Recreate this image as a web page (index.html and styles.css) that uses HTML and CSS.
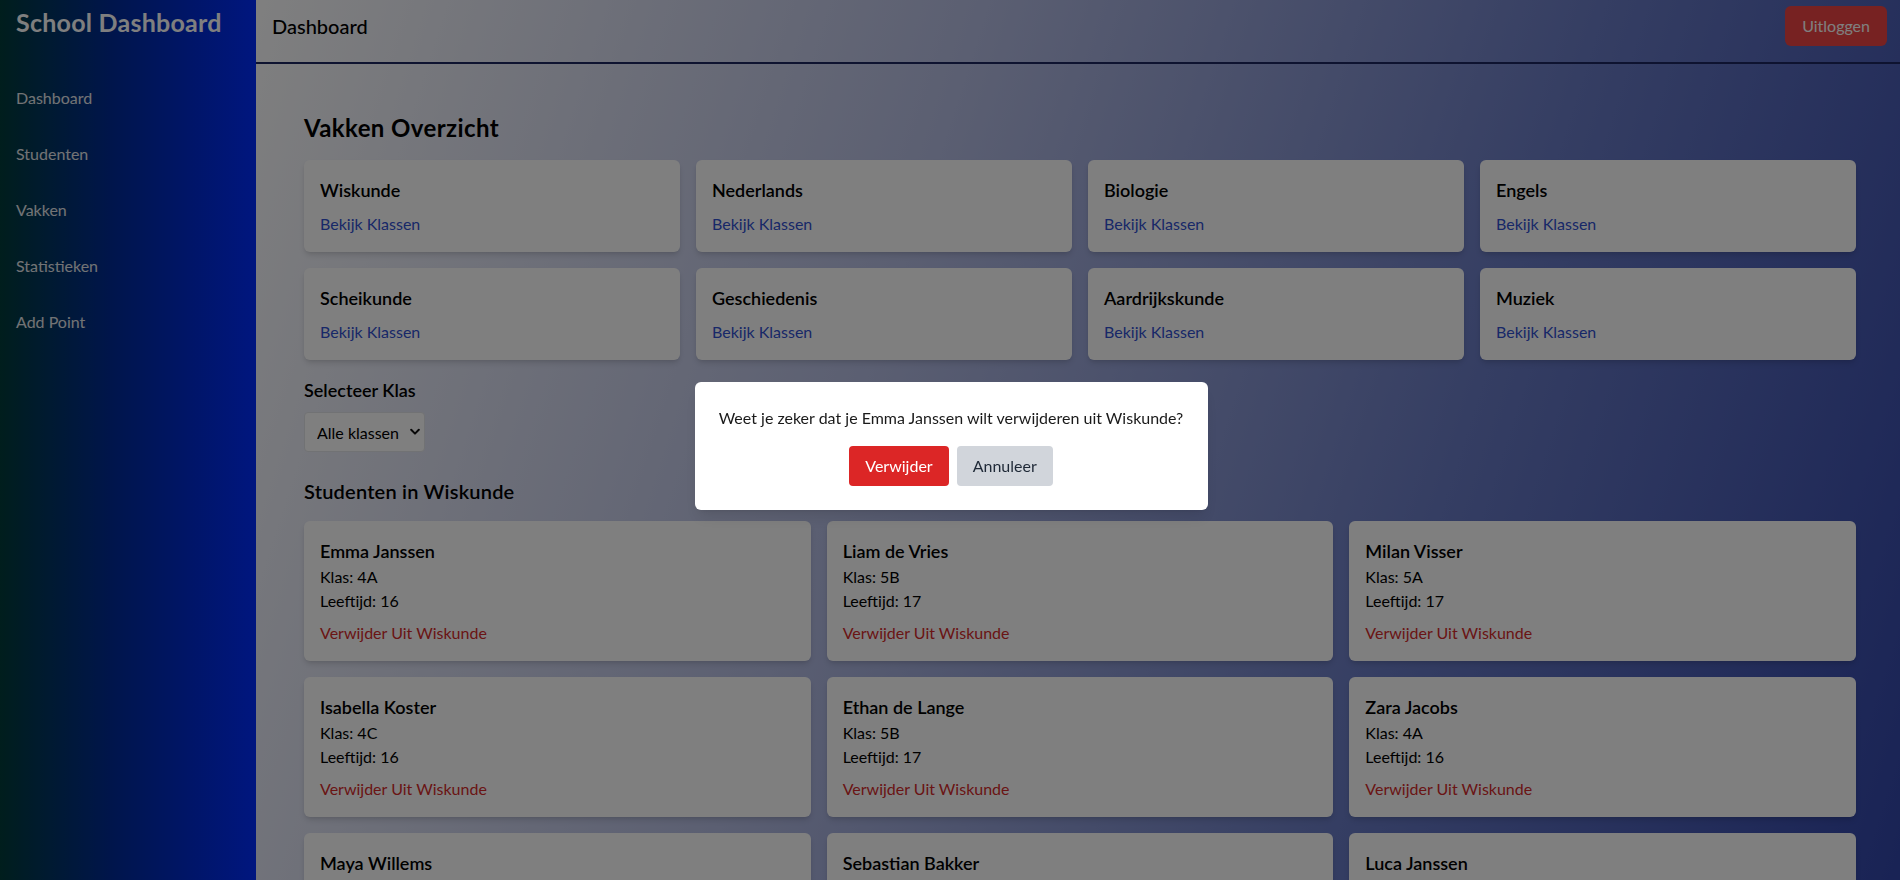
FILE: index.html
```html
<!DOCTYPE html>
<html lang="nl">
<head>
<meta charset="utf-8">
<title>School Dashboard</title>
<link rel="stylesheet" href="styles.css">
</head>
<body>
<div class="app">
  <aside class="sidebar">
    <div class="brand">School Dashboard</div>
    <nav class="nav">
      <a class="nav-link" href="#">Dashboard</a>
      <a class="nav-link" href="#">Studenten</a>
      <a class="nav-link" href="#">Vakken</a>
      <a class="nav-link" href="#">Statistieken</a>
      <a class="nav-link" href="#">Add Point</a>
    </nav>
  </aside>
  <div class="main">
    <header class="topbar">
      <h1 class="page-title">Dashboard</h1>
      <button class="logout" type="button">Uitloggen</button>
    </header>
    <main class="content">
      <h2 class="section-title">Vakken Overzicht</h2>
      <div class="subject-grid">
        <div class="card subject-card"><h3 class="card-title">Wiskunde</h3><a class="link-blue" href="#">Bekijk Klassen</a></div>
        <div class="card subject-card"><h3 class="card-title">Nederlands</h3><a class="link-blue" href="#">Bekijk Klassen</a></div>
        <div class="card subject-card"><h3 class="card-title">Biologie</h3><a class="link-blue" href="#">Bekijk Klassen</a></div>
        <div class="card subject-card"><h3 class="card-title">Engels</h3><a class="link-blue" href="#">Bekijk Klassen</a></div>
        <div class="card subject-card"><h3 class="card-title">Scheikunde</h3><a class="link-blue" href="#">Bekijk Klassen</a></div>
        <div class="card subject-card"><h3 class="card-title">Geschiedenis</h3><a class="link-blue" href="#">Bekijk Klassen</a></div>
        <div class="card subject-card"><h3 class="card-title">Aardrijkskunde</h3><a class="link-blue" href="#">Bekijk Klassen</a></div>
        <div class="card subject-card"><h3 class="card-title">Muziek</h3><a class="link-blue" href="#">Bekijk Klassen</a></div>
      </div>

      <label class="field-label" for="klas">Selecteer Klas</label>
      <div class="select-wrap">
        <select class="select" id="klas">
          <option>Alle klassen</option>
          <option>4A</option>
          <option>4B</option>
          <option>4C</option>
          <option>5A</option>
          <option>5B</option>
        </select>
        <svg class="chevron" width="10" height="8" viewBox="0 0 10 8" aria-hidden="true"><path d="M1.2 1.8 L5 5.6 L8.8 1.8" fill="none" stroke="#111" stroke-width="2" stroke-linecap="round" stroke-linejoin="round"/></svg>
      </div>

      <h2 class="students-title">Studenten in Wiskunde</h2>
      <div class="student-grid">
        <div class="card student-card"><h3 class="card-title">Emma Janssen</h3><p class="meta">Klas: 4A</p><p class="meta">Leeftijd: 16</p><a class="link-red" href="#">Verwijder Uit Wiskunde</a></div>
        <div class="card student-card"><h3 class="card-title">Liam de Vries</h3><p class="meta">Klas: 5B</p><p class="meta">Leeftijd: 17</p><a class="link-red" href="#">Verwijder Uit Wiskunde</a></div>
        <div class="card student-card"><h3 class="card-title">Milan Visser</h3><p class="meta">Klas: 5A</p><p class="meta">Leeftijd: 17</p><a class="link-red" href="#">Verwijder Uit Wiskunde</a></div>
        <div class="card student-card"><h3 class="card-title">Isabella Koster</h3><p class="meta">Klas: 4C</p><p class="meta">Leeftijd: 16</p><a class="link-red" href="#">Verwijder Uit Wiskunde</a></div>
        <div class="card student-card"><h3 class="card-title">Ethan de Lange</h3><p class="meta">Klas: 5B</p><p class="meta">Leeftijd: 17</p><a class="link-red" href="#">Verwijder Uit Wiskunde</a></div>
        <div class="card student-card"><h3 class="card-title">Zara Jacobs</h3><p class="meta">Klas: 4A</p><p class="meta">Leeftijd: 16</p><a class="link-red" href="#">Verwijder Uit Wiskunde</a></div>
        <div class="card student-card"><h3 class="card-title">Maya Willems</h3><p class="meta">Klas: 4B</p><p class="meta">Leeftijd: 16</p><a class="link-red" href="#">Verwijder Uit Wiskunde</a></div>
        <div class="card student-card"><h3 class="card-title">Sebastian Bakker</h3><p class="meta">Klas: 5A</p><p class="meta">Leeftijd: 17</p><a class="link-red" href="#">Verwijder Uit Wiskunde</a></div>
        <div class="card student-card"><h3 class="card-title">Luca Janssen</h3><p class="meta">Klas: 4C</p><p class="meta">Leeftijd: 16</p><a class="link-red" href="#">Verwijder Uit Wiskunde</a></div>
      </div>
    </main>
  </div>
</div>

<div class="overlay">
  <div class="modal" role="dialog">
    <p class="modal-text">Weet je zeker dat je Emma Janssen wilt verwijderen uit Wiskunde?</p>
    <div class="modal-actions">
      <button class="btn btn-danger" type="button">Verwijder</button>
      <button class="btn btn-muted" type="button">Annuleer</button>
    </div>
  </div>
</div>
</body>
</html>
```

FILE: styles.css
```css
* { box-sizing: border-box; }

html, body {
  margin: 0;
  padding: 0;
  height: 100%;
  overflow: hidden;
}

body {
  font-family: Lato, "Noto Sans", "Open Sans", sans-serif;
  font-size: 16px;
  line-height: 24px;
  color: #111111;
}

.app {
  display: flex;
  height: 100vh;
  overflow: hidden;
}

/* Sidebar */
.sidebar {
  width: 256px;
  flex: 0 0 256px;
  height: 100%;
  background: linear-gradient(to right, #003c3a 0%, #002a9a 45%, #002cff 100%);
  padding: 6px 0 0 0;
}

.brand {
  padding: 0 16px;
  font-size: 25px;
  line-height: 32px;
  font-weight: 700;
  letter-spacing: 0.25px;
  color: #ffffff;
  white-space: nowrap;
}

.nav {
  display: flex;
  flex-direction: column;
  margin-top: 32px;
}

.nav-link {
  display: block;
  height: 56px;
  line-height: 56px;
  padding: 0 16px;
  color: #e5e7eb;
  text-decoration: none;
  font-size: 16px;
}

/* Main column */
.main {
  flex: 1 1 auto;
  min-width: 0;
  height: 100%;
  display: flex;
  flex-direction: column;
  background: linear-gradient(108deg, #ffffff 0%, #b6bee4 38%, #6a7cc6 70%, #3246aa 100%);
  overflow: hidden;
}

.topbar {
  flex: 0 0 auto;
  height: 64px;
  display: flex;
  align-items: flex-start;
  justify-content: space-between;
  padding: 6px 13px 0 16px;
  border-bottom: 2px solid #1c2660;
}

.page-title {
  margin: 6px 0 0 0;
  font-size: 20px;
  line-height: 28px;
  font-weight: 500;
  color: #000000;
}

.logout {
  font-family: inherit;
  font-size: 16px;
  line-height: 24px;
  height: 40px;
  padding: 8px 17px;
  border: 0;
  border-radius: 6px;
  background: #ef4444;
  color: #ffffff;
  cursor: pointer;
}

.content {
  flex: 1 1 auto;
  padding: 48px 44px 0 48px;
  overflow: hidden;
}

.section-title {
  margin: 0 0 16px 0;
  font-size: 24px;
  line-height: 32px;
  font-weight: 700;
  letter-spacing: 0.4px;
  color: #000000;
}

.card {
  background: #ffffff;
  border-radius: 6px;
  padding: 16px;
  box-shadow: 0 4px 6px -1px rgba(0, 0, 0, 0.12), 0 2px 4px -2px rgba(0, 0, 0, 0.1);
}

.subject-grid {
  display: grid;
  grid-template-columns: repeat(4, 1fr);
  gap: 16px;
  margin-bottom: 16px;
}

.card-title {
  margin: 0;
  font-size: 18px;
  line-height: 28px;
  font-weight: 600;
  color: #000000;
}

.link-blue {
  display: inline-block;
  margin-top: 8px;
  color: #3050d0;
  text-decoration: none;
}

.field-label {
  display: block;
  margin-bottom: 8px;
  font-size: 18px;
  line-height: 28px;
  font-weight: 600;
  color: #000000;
}

.select-wrap {
  position: relative;
  width: 121px;
  height: 40px;
}

.select {
  appearance: none;
  -webkit-appearance: none;
  width: 100%;
  height: 40px;
  padding: 0 20px 0 12px;
  font-family: inherit;
  font-size: 16px;
  color: #000000;
  background: #ffffff;
  border: 1px solid #e2e4e8;
  border-radius: 4px;
}

.chevron {
  position: absolute;
  right: 5px;
  top: 16px;
  pointer-events: none;
}

.students-title {
  margin: 25px 0 16px 0;
  font-size: 20px;
  line-height: 28px;
  font-weight: 600;
  letter-spacing: 0.2px;
  color: #000000;
}

.student-grid {
  display: grid;
  grid-template-columns: repeat(3, 1fr);
  gap: 16px;
}

.meta {
  margin: 0;
  font-size: 16px;
  line-height: 24px;
  color: #000000;
}

.link-red {
  display: inline-block;
  margin-top: 8px;
  color: #d42a2a;
  text-decoration: none;
}

/* Modal */
.overlay {
  position: fixed;
  inset: 0;
  background: rgba(0, 0, 0, 0.5);
  display: flex;
  align-items: center;
  justify-content: center;
  padding-top: 12px;
  padding-left: 2px;
}

.modal {
  width: 513px;
  padding: 24px;
  background: #ffffff;
  border-radius: 6px;
  text-align: center;
  box-shadow: 0 10px 15px -3px rgba(0, 0, 0, 0.1), 0 4px 6px -4px rgba(0, 0, 0, 0.1);
}

.modal-text {
  margin: 0 0 16px 0;
  font-size: 16px;
  line-height: 24px;
  color: #1a1a1a;
}

.modal-actions {
  display: flex;
  justify-content: center;
  gap: 8px;
}

.btn {
  font-family: inherit;
  font-size: 16px;
  line-height: 24px;
  height: 40px;
  padding: 8px 16px;
  border: 0;
  border-radius: 4px;
  cursor: pointer;
}

.btn-danger {
  background: #dc2626;
  color: #ffffff;
}

.btn-muted {
  background: #d1d5db;
  color: #1f2937;
}
```
